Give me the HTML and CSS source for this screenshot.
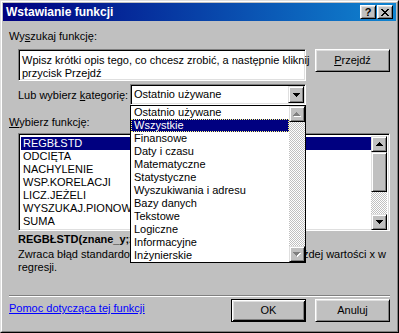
FILE: index.html
```html
<!DOCTYPE html>
<html lang="pl">
<head>
<meta charset="utf-8">
<title>Wstawianie funkcji</title>
<link rel="stylesheet" href="styles.css">
</head>
<body>
<div class="window">
  <div class="frame">
    <div class="titlebar">
      <span class="title">Wstawianie funkcji</span>
      <div class="tbtns">
        <div class="tbtn help">?</div>
        <div class="tbtn close">
          <svg width="8" height="7" viewBox="0 0 8 7" shape-rendering="crispEdges"><path d="M0 0h2v1h-2zM6 0h2v1h-2zM1 1h2v1h-2zM5 1h2v1h-2zM2 2h4v1h-4zM3 3h2v1h-2zM2 4h4v1h-4zM1 5h2v1h-2zM5 5h2v1h-2zM0 6h2v1h-2zM6 6h2v1h-2z" fill="#000"/></svg>
        </div>
      </div>
    </div>
    <div class="content">
      <div class="label first">Wy<u>s</u>zukaj funkcję:</div>
      <div class="search-row">
        <div class="field search">Wpisz krótki opis tego, co chcesz zrobić, a następnie kliknij<br>przycisk Przejdź</div>
        <div class="btn go"><u>P</u>rzejdź</div>
      </div>
      <div class="cat-row">
        <span class="cat-label">Lub wybierz <u>k</u>ategorię:</span>
        <div class="combo">
          <div class="combo-inner">
            <span class="combo-text">Ostatnio używane</span>
            <div class="sbtn combo-btn">
              <svg width="7" height="4" viewBox="0 0 7 4" shape-rendering="crispEdges"><path d="M0 0h7v1h-7zM1 1h5v1h-5zM2 2h3v1h-3zM3 3h1v1h-1z" fill="#000"/></svg>
            </div>
          </div>
          <div class="dropdown">
            <ul class="dd-items">
              <li>Ostatnio używane</li>
              <li class="sel focus">Wszystkie</li>
              <li>Finansowe</li>
              <li>Daty i czasu</li>
              <li>Matematyczne</li>
              <li>Statystyczne</li>
              <li>Wyszukiwania i adresu</li>
              <li>Bazy danych</li>
              <li>Tekstowe</li>
              <li>Logiczne</li>
              <li>Informacyjne</li>
              <li>Inżynierskie</li>
            </ul>
            <div class="vscroll">
              <div class="sbtn arrow">
                <svg width="8" height="5" viewBox="0 0 8 5" shape-rendering="crispEdges"><path d="M4 1h1v1h-1zM3 2h3v1h-3zM2 3h5v1h-5zM1 4h7v1h-7z" fill="#fff"/><path d="M3 0h1v1h-1zM2 1h3v1h-3zM1 2h5v1h-5zM0 3h7v1h-7z" fill="#808080"/></svg>
              </div>
              <div class="track"></div>
              <div class="sbtn arrow">
                <svg width="8" height="5" viewBox="0 0 8 5" shape-rendering="crispEdges"><path d="M1 1h7v1h-7zM2 2h5v1h-5zM3 3h3v1h-3zM4 4h1v1h-1z" fill="#fff"/><path d="M0 0h7v1h-7zM1 1h5v1h-5zM2 2h3v1h-3zM3 3h1v1h-1z" fill="#808080"/></svg>
              </div>
            </div>
          </div>
        </div>
      </div>
      <div class="label fn-label"><u>W</u>ybierz funkcję:</div>
      <div class="field listbox">
        <ul class="fn-items">
          <li class="sel">REGBŁSTD</li>
          <li>ODCIĘTA</li>
          <li>NACHYLENIE</li>
          <li>WSP.KORELACJI</li>
          <li>LICZ.JEŻELI</li>
          <li>WYSZUKAJ.PIONOWO</li>
          <li>SUMA</li>
        </ul>
        <div class="vscroll">
          <div class="sbtn arrow">
            <svg width="7" height="4" viewBox="0 0 7 4" shape-rendering="crispEdges"><path d="M3 0h1v1h-1zM2 1h3v1h-3zM1 2h5v1h-5zM0 3h7v1h-7z" fill="#000"/></svg>
          </div>
          <div class="sbtn thumb"></div>
          <div class="track"></div>
          <div class="sbtn arrow">
            <svg width="7" height="4" viewBox="0 0 7 4" shape-rendering="crispEdges"><path d="M0 0h7v1h-7zM1 1h5v1h-5zM2 2h3v1h-3zM3 3h1v1h-1z" fill="#000"/></svg>
          </div>
        </div>
      </div>
      <div class="sig">REGBŁSTD(znane_y;znane_x)</div>
      <div class="desc">Zwraca błąd standardowy przewidywanej wartości y dla każdej wartości x w<br>regresji.</div>
      <div class="sep"></div>
      <div class="footer">
        <a class="help-link" href="#">Pomoc dotycząca tej funkcji</a>
        <div class="buttons">
          <div class="btn default">OK</div>
          <div class="btn">Anuluj</div>
        </div>
      </div>
    </div>
  </div>
</div>
</body>
</html>
```
FILE: styles.css
```css
* { box-sizing: border-box; }
html, body { margin: 0; padding: 0; }
body {
  font-family: "Liberation Sans", Arial, sans-serif;
  font-size: 11px;
  line-height: 13px;
  color: #000;
  background: #c0c0c0;
}
ul { list-style: none; margin: 0; padding: 0; }

.window {
  width: 399px;
  height: 333px;
  border: 1px solid;
  border-color: #dfdfdf #000 #000 #dfdfdf;
  background: #c0c0c0;
}
.frame {
  height: 100%;
  border: 1px solid;
  border-color: #fff #808080 #808080 #fff;
  padding: 1px;
  display: flex;
  flex-direction: column;
}

.titlebar {
  height: 18px;
  flex: none;
  background: linear-gradient(to right, #000080, #1084d0);
  display: flex;
  align-items: center;
  justify-content: space-between;
  padding: 0 3px 0 3px;
}
.title {
  color: #fff;
  font-weight: bold;
  font-size: 12px;
  line-height: 18px;
}
.tbtns { display: flex; gap: 1px; }
.tbtn {
  width: 16px;
  height: 14px;
  background: #c0c0c0;
  border: 1px solid;
  border-color: #fff #000 #000 #fff;
  box-shadow: inset 1px 1px #dfdfdf, inset -1px -1px #808080;
  display: flex;
  align-items: center;
  justify-content: center;
}
.help {
  font-weight: bold;
  font-size: 11px;
  line-height: 12px;
}

.content { padding: 0 6px; flex: 1; }

.label.first { margin-top: 9px; }

.field {
  background: #fff;
  border: 1px solid;
  border-color: #808080 #fff #fff #808080;
  box-shadow: inset 1px 1px #000, inset -1px -1px #dfdfdf;
}
.btn {
  background: #c0c0c0;
  border: 1px solid;
  border-color: #fff #000 #000 #fff;
  box-shadow: inset 1px 1px #dfdfdf, inset -1px -1px #808080;
  display: flex;
  align-items: center;
  justify-content: center;
  width: 75px;
  height: 23px;
}
.btn.default {
  border-color: #000;
  box-shadow: inset 1px 1px #fff, inset -1px -1px #000, inset 2px 2px #dfdfdf, inset -2px -2px #808080;
}
.sbtn {
  background: #c0c0c0;
  border: 1px solid;
  border-color: #dfdfdf #000 #000 #dfdfdf;
  box-shadow: inset 1px 1px #fff, inset -1px -1px #808080;
  display: flex;
  align-items: center;
  justify-content: center;
}

.search-row {
  display: flex;
  gap: 9px;
  margin-top: 6px;
  padding-left: 9px;
  align-items: flex-start;
}
.search {
  width: 288px;
  height: 32px;
  padding: 4px 3px;
  white-space: nowrap;
}

.cat-row {
  display: flex;
  align-items: center;
  margin-top: 3px;
  padding-left: 9px;
}
.cat-label { width: 112px; padding-top: 1px; }
.combo {
  position: relative;
  width: 176px;
  height: 21px;
  background: #fff;
  border: 1px solid;
  border-color: #808080 #fff #fff #808080;
  box-shadow: inset 1px 1px #000, inset -1px -1px #dfdfdf;
  padding: 1px;
}
.combo-inner {
  height: 100%;
  display: flex;
  align-items: center;
  justify-content: space-between;
}
.combo-text { padding-left: 2px; }
.combo-btn { width: 16px; height: 17px; }

.dropdown {
  position: absolute;
  left: -1px;
  top: 20px;
  width: 176px;
  height: 158px;
  background: #fff;
  border: 1px solid #000;
  display: flex;
  z-index: 5;
}
.dd-items { flex: 1; }
.dd-items li {
  height: 13px;
  line-height: 13px;
  padding-left: 3px;
  white-space: nowrap;
}
.sel { background: #000080; color: #fff; }
.focus { outline: 1px dotted #ffff80; outline-offset: -1px; }

.vscroll {
  width: 16px;
  flex: none;
  display: flex;
  flex-direction: column;
}
.vscroll .arrow { height: 16px; flex: none; }
.track {
  flex: 1;
  background: repeating-conic-gradient(#c0c0c0 0 25%, #fff 0 50%) 0 0 / 2px 2px;
}
.thumb { height: 40px; flex: none; }

.fn-label { margin-top: 11px; }
.listbox {
  margin-top: 4px;
  margin-left: 9px;
  width: 372px;
  height: 98px;
  padding: 2px;
  display: flex;
}
.fn-items { flex: 1; padding-top: 1px; }
.fn-items li {
  height: 13px;
  line-height: 13px;
  padding-left: 2px;
  white-space: nowrap;
}
.listbox .vscroll { height: 94px; }

.sig {
  margin-top: 2px;
  padding-left: 9px;
  font-weight: bold;
}
.desc {
  margin-top: 2px;
  padding-left: 9px;
  white-space: nowrap;
}
.sep {
  margin-top: 21px;
  height: 2px;
  border-top: 1px solid #808080;
  border-bottom: 1px solid #fff;
}
.footer {
  display: flex;
  justify-content: space-between;
  align-items: flex-start;
  margin-top: 2px;
}
.help-link {
  color: #0000ff;
  text-decoration: underline;
  margin-top: 3px;
}
.buttons { display: flex; gap: 9px; }
```
